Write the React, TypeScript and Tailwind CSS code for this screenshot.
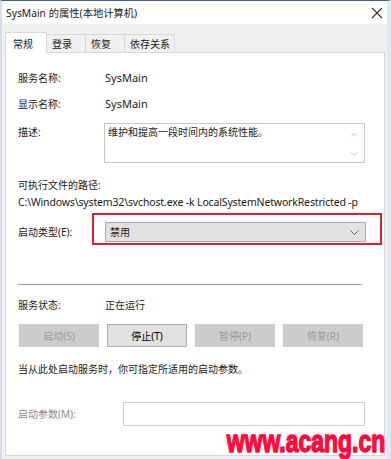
const font = { fontFamily: '"Noto Sans", "Noto Sans CJK SC", sans-serif' };

const Row = ({ label, value, className = '' }: { label: string; value: string; className?: string }) => (
  <div className={`flex h-[16px] items-center ${className}`}>
    <div className="w-[87px] shrink-0">{label}</div>
    <div className="text-[11px]">{value}</div>
  </div>
);

const Btn = ({ label, enabled = false }: { label: string; enabled?: boolean }) => (
  <div
    className={`flex h-[23px] w-[80px] items-center justify-center border ${
      enabled ? 'border-[#adadad] bg-[#e1e1e1] text-black' : 'border-[#cccccc] bg-[#cccccc] text-[#9a9a9a]'
    }`}
  >
    {label}
  </div>
);

const tabs = ['常规', '登录', '恢复', '依存关系'];

export default function App() {
  return (
    <div
      className="relative flex h-[459px] w-[391px] flex-col overflow-hidden border-l-2 border-r-4 border-t border-l-[#d3dfec] border-r-[#dfe9f3] border-t-[#3d5f80] bg-[#f0f0f0] text-[10px] leading-[16px] text-[#1a1a1a]"
      style={font}
    >
      {/* Title bar */}
      <div className="flex h-[23px] shrink-0 items-center justify-between bg-white pl-[4px] pr-[4px]">
        <span className="text-[10.3px] text-[#222]">SysMain 的属性(本地计算机)</span>
        <svg width="12" height="12" viewBox="0 0 12 12" className="text-[#333]">
          <path d="M1 1L11 11M11 1L1 11" stroke="currentColor" strokeWidth="1.1" />
        </svg>
      </div>

      {/* Tabs */}
      <div className="flex h-[28px] shrink-0 items-end pl-[3px]">
        {tabs.map((t, i) =>
          i === 0 ? (
            <div
              key={t}
              className="relative z-10 -mb-px flex h-[21px] w-[42px] items-start border border-b-0 border-[#d9d9d9] bg-white pl-[7px] pt-[3px]"
            >
              {t}
            </div>
          ) : (
            <div
              key={t}
              className={`flex h-[18px] items-start border border-b-0 border-l-0 border-[#d9d9d9] bg-[#f0f0f0] pl-[5px] pt-px ${
                i === 3 ? 'w-[50px]' : 'w-[39px]'
              }`}
            >
              {t}
            </div>
          )
        )}
      </div>

      {/* Panel */}
      <div className="relative mb-[3px] ml-[3px] mr-[2px] flex-1 border border-[#d9d9d9] bg-white pl-[12px]">
        <Row label="服务名称:" value="SysMain" className="mt-[17px]" />
        <Row label="显示名称:" value="SysMain" className="mt-[10px]" />

        <div className="mt-[11px] flex">
          <div className="w-[86px] shrink-0 pt-px">描述:</div>
          <div className="relative h-[40px] w-[261px] border border-[#c8c8c8] pl-[3px] pt-[1px] leading-[15px]">
            维护和提高一段时间内的系统性能。
            <svg width="8" height="5" viewBox="0 0 8 5" className="absolute right-[6px] top-[8px] text-[#c0c0c0]">
              <path d="M1 4.5L4 1.5L7 4.5" fill="none" stroke="currentColor" />
            </svg>
            <svg width="8" height="5" viewBox="0 0 8 5" className="absolute bottom-[5px] right-[6px] text-[#c0c0c0]">
              <path d="M1 0.5L4 3.5L7 0.5" fill="none" stroke="currentColor" />
            </svg>
          </div>
        </div>

        <div className="mt-[14px] h-[16px]">可执行文件的路径:</div>
        <div className="mt-[1px] h-[16px] whitespace-nowrap text-[10.5px] tracking-[-0.15px]">
          C:\Windows\system32\svchost.exe -k LocalSystemNetworkRestricted -p
        </div>

        <div className="relative mt-[12px] flex h-[20px] items-center">
          <div className="w-[87px] shrink-0">启动类型(E):</div>
          <div className="flex h-[20px] w-[261px] items-center justify-between border border-[#adadad] bg-[#e1e1e1] pl-[4px] pr-[6px]">
            <span>禁用</span>
            <svg width="9" height="5" viewBox="0 0 9 5" className="text-[#6b6b6b]">
              <path d="M0.5 0.5L4.5 4.5L8.5 0.5" fill="none" stroke="currentColor" />
            </svg>
          </div>
          <div className="absolute left-[74px] top-[-9px] h-[32px] w-[290px] border-2 border-[#d9222a]" />
        </div>

        <div className="mt-[42px] h-px w-[344px] bg-[#a0a0a0]" />

        <Row label="服务状态:" value="" className="mt-[12px]" />
        <div className="-mt-[16px] ml-[87px] h-[16px]">正在运行</div>

        <div className="ml-px mt-[11px] flex gap-[8px]">
          <Btn label="启动(S)" />
          <Btn label="停止(T)" enabled />
          <Btn label="暂停(P)" />
          <Btn label="恢复(R)" />
        </div>

        <div className="mt-[14px] h-[16px]">当从此处启动服务时，你可指定所适用的启动参数。</div>

        <div className="mt-[25px] flex items-center">
          <div className="w-[105px] shrink-0 text-[#8c8c8c]">启动参数(M):</div>
          <div className="h-[24px] w-[242px] border border-[#cccccc] bg-white" />
        </div>

        {/* watermark */}
        <div
          className="absolute bottom-[-4px] right-[-1px] origin-right scale-x-[0.74] whitespace-nowrap text-[31px] font-black leading-[34px] text-[#ff0a3c] [-webkit-text-stroke:1.5px_#ff0a3c]"
          style={{ fontFamily: '"Liberation Sans", Arial, sans-serif' }}
        >
          www.acang.cn
        </div>
      </div>
    </div>
  );
}
